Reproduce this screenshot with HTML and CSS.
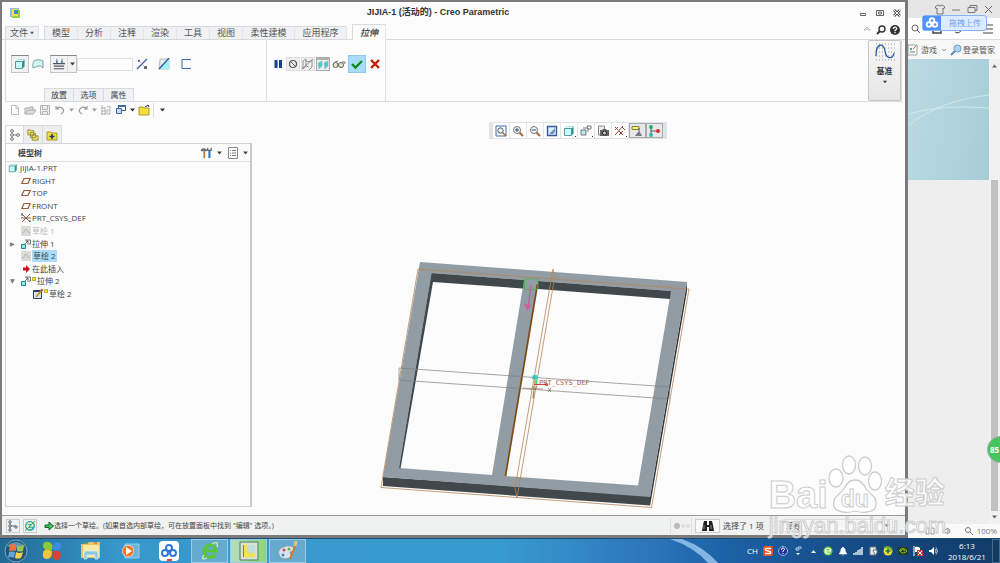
FILE: index.html
```html
<!DOCTYPE html>
<html lang="zh-CN">
<head>
<meta charset="utf-8">
<title>JIJIA-1 (活动的) - Creo Parametric</title>
<link rel="stylesheet" href="styles.css">
</head>
<body>
<svg class="defs" aria-hidden="true">
  <symbol id="caret" viewBox="0 0 5 4"><path d="M0 .5h5L2.500 3.500z" fill="currentColor"/></symbol>
  <symbol id="plane" viewBox="0 0 10 8"><path d="M3 1.500h6.200L7 6.500H.8z" fill="none" stroke="#9c5a35" stroke-width="1.200"/></symbol>
  <symbol id="sketch" viewBox="0 0 10 10"><path d="M0 0h10v10H0z" fill="#dcdcd6"/><path d="M1 7Q3 7 4 4Q5 2 6 4Q7 7 9 7" fill="none" stroke="#b5b5ae"/></symbol>
  <symbol id="extrude" viewBox="0 0 10 10"><path d="M4 1h5.500v4H6" fill="none" stroke="#555" stroke-width=".8"/><path d="M.5 5.500h4v4h-4z" fill="#8fe9ec" stroke="#27858c"/><path d="M4 5l3-3M5 2h2v2" fill="none" stroke="#444" stroke-width=".8"/></symbol>
  <symbol id="cube" viewBox="0 0 12 12"><path d="M1.500 3.500l2-2h7v7l-2 2z" fill="#2d8d93"/><path d="M1.500 3.500l2-2h7l-2 2z" fill="#dcffff"/><path d="M1.500 3.500h7v7h-7z" fill="#c4fbfb" stroke="#3b8388" stroke-width=".8"/></symbol>
  <symbol id="folder" viewBox="0 0 12 12"><path d="M1 3h4l1 1h5v7H1z" fill="#f3e13a" stroke="#99851a" stroke-width=".8"/></symbol>
  <symbol id="lens" viewBox="0 0 12 12"><path d="M7.500 7.500l3.500 3.500" stroke="#a6683b" stroke-width="2"/><circle cx="5" cy="5" r="3.500" fill="#f5fbff" stroke="#6c7075"/></symbol>
</svg>

<div class="desktop">
<section class="creo">
  <header class="titlebar">
    <svg class="app-icon" viewBox="0 0 12 12"><path d="M1 1h9v9H1z" fill="#8dc0df"/><path d="M3 3h8v8H3z" fill="#9dcc42"/><path d="M3 2h6v7H3z" fill="#f4df54"/><path d="M5 3h4v4H5z" fill="#3a91b6"/></svg>
    <h1>JIJIA-1 (活动的) - Creo Parametric</h1>
    <div class="win-buttons">
      <button aria-label="最小化"><svg viewBox="0 0 8 8"><path d="M1.500 4.500h5v2h-5z" fill="none" stroke="#666"/></svg></button>
      <button aria-label="还原"><svg viewBox="0 0 8 8"><path d="M.5 1.500h7v5h-7zM2.500 3h3v2h-3z" fill="none" stroke="#666"/></svg></button>
      <button aria-label="关闭"><svg viewBox="0 0 8 8"><path d="M1 1l6 6M7 1L1 7" stroke="#555" stroke-width="2.600"/><path d="M1 1l6 6M7 1L1 7" stroke="#fff"/></svg></button>
    </div>
  </header>

  <nav class="tabs">
    <button class="tab file">文件<svg class="caret"><use href="#caret"/></svg></button>
    <div class="tab-group">
      <button class="tab">模型</button><button class="tab">分析</button><button class="tab">注释</button><button class="tab">渲染</button><button class="tab">工具</button><button class="tab">视图</button><button class="tab wide">柔性建模</button><button class="tab wide">应用程序</button>
    </div>
    <button class="tab active">拉伸</button>
    <div class="tab-tools">
      <button aria-label="折叠功能区"><svg viewBox="0 0 10 10"><path d="M2 5l3-3 3 3H6.500L5 3.500 3.500 5z" fill="#fff" stroke="#999" stroke-width=".7"/></svg></button>
      <button aria-label="搜索"><svg viewBox="0 0 10 10"><circle cx="6" cy="4" r="3" fill="none" stroke="#333" stroke-width="1.400"/><path d="M4 6L1 9" stroke="#333" stroke-width="2"/></svg></button>
      <button aria-label="帮助"><svg viewBox="0 0 10 10"><circle cx="5" cy="5" r="5" fill="#333"/><path d="M3.300 3.800Q3.500 2.200 5 2.200T6.700 3.700Q6.600 4.700 5.100 5.200V6.200M5 7v1.300" fill="none" stroke="#fff" stroke-width="1.300"/></svg></button>
    </div>
  </nav>

  <div class="ribbon">
    <div class="group options">
      <div class="controls">
        <button class="tool pressed" aria-label="拉伸为实体"><svg class="i12"><use href="#cube"/></svg></button>
        <button class="tool" aria-label="拉伸为曲面"><svg class="i12" viewBox="0 0 12 12"><path d="M1 10Q0 3 4 2Q8 1 11 3V10Q8 7 6 8T1 10z" fill="#d3f6f2" stroke="#6f9895" stroke-width=".9"/></svg></button>
        <button class="tool pressed depth" aria-label="深度选项"><svg class="i14" viewBox="0 0 14 14"><path d="M0 6.500h14M1 9.500h12M1 12.500h12" stroke="#50555e" stroke-width="1.300"/><path d="M4.500 1v5M10.500 1v5" stroke="#4467a8"/><path d="M3 4h3L4.500 6zM9 4h3l-1.500 2z" fill="#4467a8"/></svg><span><svg class="caret"><use href="#caret"/></svg></span></button>
        <input class="depth-value" type="text" aria-label="深度值">
        <button class="tool flip" aria-label="反向"><svg class="i12" viewBox="0 0 12 12"><path d="M1 11L11 1" stroke="#3a5fb0" stroke-width="1.200"/><path d="M2 2h2v2H2zM8 8h3v3H8z" fill="#666"/><path d="M3 3l2 2M7 7l2 2" stroke="#999" stroke-width=".8"/></svg></button>
        <button class="tool" aria-label="移除材料"><svg class="i12" viewBox="0 0 12 12"><path d="M2 1h9v10H1z" fill="#e6ece8" stroke="#a8aaa0" stroke-width=".7"/><path d="M11 1v10H2z" fill="#9bf4f7"/><path d="M1 11L11 0" stroke="#3154ad" stroke-width="1.300"/></svg></button>
        <button class="tool" aria-label="加厚草绘"><svg class="i12" viewBox="0 0 12 12"><path d="M11 1.500H2v9h9" fill="none" stroke="#4163b5"/></svg></button>
      </div>
      <div class="subtabs"><button>放置</button><button>选项</button><button>属性</button></div>
    </div>
    <div class="group confirm">
      <button aria-label="暂停"><svg class="i12" viewBox="0 0 12 12"><path d="M4 2v8M8.500 2v8" stroke="#173f8e" stroke-width="3"/></svg></button>
      <button class="soft" aria-label="无预览"><svg class="i12" viewBox="0 0 12 12"><circle cx="6" cy="6" r="3.500" fill="none" stroke="#555" stroke-width="1.200"/><path d="M3.500 3.500l5 5" stroke="#555"/></svg></button>
      <button class="soft" aria-label="未附加预览"><svg class="i12" viewBox="0 0 12 12"><path d="M1 3l3-2v7l-3 3zM7 4l3-2v7l-3 3M0 11L11 1M4 3l4 1M4 8l3 1" fill="none" stroke="#888" stroke-width=".9"/></svg></button>
      <button class="soft dark" aria-label="附加预览"><svg class="i12" viewBox="0 0 12 12"><path d="M0 1h12" stroke="#777"/><path d="M1 5l4-2v5l-3 3zM7 5l4-2v5l-3 3z" fill="#49cbd2" stroke="#8ebabc" stroke-width=".6"/></svg></button>
      <button class="glasses" aria-label="校验预览"><svg class="i14" viewBox="0 0 14 12"><circle cx="3.500" cy="7" r="2.500" fill="#e8e5d6" stroke="#62614e"/><circle cx="9" cy="7" r="2.500" fill="#e8e5d6" stroke="#62614e"/><path d="M3 4l3-1M10 4l3 0v2" fill="none" stroke="#776"/></svg></button>
      <button class="accept" aria-label="确定"><svg class="i12" viewBox="0 0 12 12"><path d="M1 6l3.500 3.500L11 3" fill="none" stroke="#068d19" stroke-width="2.300"/></svg></button>
      <button class="cancel" aria-label="取消"><svg class="i12" viewBox="0 0 12 12"><path d="M2 2l8 8M10 2L2 10" stroke="#c61a05" stroke-width="2.300"/></svg></button>
    </div>
    <button class="datum"><svg viewBox="0 0 20 20"><path d="M1 2h19M1 6h19M1 10h19M1 14h19M1 18h19" stroke="#9299a3" stroke-dasharray="1 2"/><path d="M1 14C1 0 9 1 10 9S18 18 19 11" fill="none" stroke="#2858a2" stroke-width="1.300"/></svg><span>基准</span><svg class="caret"><use href="#caret"/></svg></button>
  </div>

  <div class="quick">
    <button aria-label="新建"><svg class="i12" viewBox="0 0 12 12"><path d="M2.500 1.500h5l2 2v7h-7zM7 1.500v3h3" fill="#fff" stroke="#bbb"/></svg></button>
    <button aria-label="打开"><svg class="i12" viewBox="0 0 12 12"><path d="M1 10V4h4l1-1h3v3M1 10l3-4h8l-3 4z" fill="#ddd" stroke="#aaa"/></svg></button>
    <button aria-label="保存"><svg class="i12" viewBox="0 0 12 12"><path d="M1.500 1.500h9v9h-9zM3.500 1.500h5v4h-5zM3.500 10V7.500h5V10" fill="#eee" stroke="#b5b5b5"/></svg></button>
    <button class="split" aria-label="撤消"><svg class="i12" viewBox="0 0 12 12"><path d="M2 5q3-3 6-1 4 3-1 6M2 2v3h3" fill="none" stroke="#999" stroke-width="1.200"/></svg><svg class="caret"><use href="#caret"/></svg></button>
    <button class="split" aria-label="重做"><svg class="i12" viewBox="0 0 12 12"><path d="M10 5Q7 2 4 4q-4 3 1 6M10 2v3H7" fill="none" stroke="#999" stroke-width="1.200"/></svg><svg class="caret"><use href="#caret"/></svg></button>
    <button aria-label="重新生成"><svg class="i12" viewBox="0 0 12 12"><path d="M2 1v10M5 3v8M1 4h4M1 7h5M1 10h5M7 3l3-1v3M7 6h3v4H7z" fill="none" stroke="#b2b2b2"/></svg></button>
    <button class="split on" aria-label="窗口"><svg class="i12" viewBox="0 0 12 12"><path d="M3.500 1.500h7v5h-7z" fill="#fff" stroke="#456"/><path d="M3 2h8" stroke="#3a69a7" stroke-width="2"/><path d="M1.500 4.500h5v5h-5z" fill="#c6dcf6" stroke="#3765a9"/></svg><svg class="caret"><use href="#caret"/></svg></button>
    <button aria-label="关闭窗口"><svg class="i12"><use href="#folder"/><path d="M7 3l3-2 1 2" fill="none" stroke="#333"/></svg></button>
    <button class="more" aria-label="自定义"><svg class="caret"><use href="#caret"/></svg></button>
  </div>

  <main class="work">
    <aside class="sidebar">
      <div class="side-tabs">
        <button class="selected" aria-label="模型树"><svg class="i12" viewBox="0 0 12 12"><g fill="#fff" stroke="#666" stroke-width=".9"><circle cx="3" cy="2" r="1.400"/><circle cx="3" cy="6" r="1.400"/><circle cx="3" cy="10" r="1.400"/><circle cx="9" cy="6" r="1.400"/><path d="M4.500 6h3"/></g></svg></button>
        <button aria-label="文件夹浏览器"><svg class="i14" viewBox="0 0 14 14"><path d="M1 1h3l1 1h3v5H1zM4 4h3l1 1h2v5H4zM6 7h3l1 1h3v5H6z" fill="#f2e05b" stroke="#7b7435" stroke-width=".8"/></svg></button>
        <button aria-label="收藏夹"><svg class="i12"><use href="#folder"/><path d="M6 5v5M3.500 7.500h5" stroke="#1c2c87" stroke-width="1.500"/></svg></button>
      </div>
      <div class="panel">
        <div class="panel-head">
          <h2>模型树</h2>
          <button aria-label="设置"><svg class="i14" viewBox="0 0 14 14"><path d="M1 3Q4 0 8 3v2H1z" fill="#69706f"/><path d="M5 5v8" stroke="#bd772d" stroke-width="2"/><path d="M11 4v9" stroke="#2f79bd" stroke-width="2.500"/><path d="M9 1v3h4V1" fill="none" stroke="#666" stroke-width="1.500"/></svg><svg class="caret"><use href="#caret"/></svg></button>
          <button aria-label="显示"><svg class="i12" viewBox="0 0 12 12"><path d="M1.500.5h9v11h-9z" fill="#fff" stroke="#8a8a82"/><path d="M3 3.500h1M5 3.500h4M3 6h1M5 6h4M3 8.500h1M5 8.500h4" stroke="#777"/></svg><svg class="caret"><use href="#caret"/></svg></button>
        </div>
        <ul class="tree">
          <li class="root"><svg class="i10" viewBox="0 0 12 12"><use href="#cube"/></svg>JIJIA-1.PRT</li>
          <li><svg class="i10"><use href="#plane"/></svg>RIGHT</li>
          <li><svg class="i10"><use href="#plane"/></svg>TOP</li>
          <li><svg class="i10"><use href="#plane"/></svg>FRONT</li>
          <li><svg class="i10" viewBox="0 0 10 10"><path d="M1 1l8 8M1 9l8-8M0 5h10" stroke="#8a5a3c"/><path d="M1 0v3M8 8h2" stroke="#555"/></svg>PRT_CSYS_DEF</li>
          <li class="muted"><svg class="i10"><use href="#sketch"/></svg>草绘 1</li>
          <li><span class="twist">▶</span><svg class="i10"><use href="#extrude"/></svg>拉伸 1</li>
          <li><svg class="i10"><use href="#sketch"/></svg><mark>草绘 2</mark></li>
          <li><svg class="i10" viewBox="0 0 10 10"><path d="M2 3.500h3V1L9 5 5 9V6.500H2z" fill="#c81818"/></svg>在此插入</li>
          <li><span class="twist">▼</span><svg class="i10"><use href="#extrude"/></svg><i class="new"></i>拉伸 2</li>
          <li class="child"><svg class="i10" viewBox="0 0 10 10"><path d="M.5 1.500h8v8h-8z" fill="#dfe7ee" stroke="#253e72"/><path d="M1 2h7" stroke="#253e72" stroke-width="2"/><path d="M3 8l6-7" stroke="#c78b22" stroke-width="1.800"/><path d="M8.500 1.500L9.500.5" stroke="#b41c17" stroke-width="2"/></svg><i class="new"></i>草绘 2</li>
        </ul>
      </div>
    </aside>

    <section class="viewport">
      <div class="view-tools">
        <button aria-label="重新调整"><svg class="i12" viewBox="0 0 12 12"><path d="M1 1h10v10H1z" fill="#fff" stroke="#4168a8"/><circle cx="5.500" cy="5.500" r="2.700" fill="#e5f0f8" stroke="#555"/><path d="M7.500 7.500L11 11" stroke="#a6683b" stroke-width="1.600"/></svg></button>
        <button aria-label="放大"><svg class="i12"><use href="#lens"/><path d="M3 5h4M5 3v4" stroke="#444"/></svg></button>
        <button aria-label="缩小"><svg class="i12"><use href="#lens"/><path d="M3 5h4" stroke="#444"/></svg></button>
        <button aria-label="重画"><svg class="i12" viewBox="0 0 12 12"><path d="M1.500 1.500h9v9h-9z" fill="#e0ecfb" stroke="#36599a" stroke-width="1.400"/><path d="M3 9l6-6v4L7 9z" fill="#7193c4"/></svg></button>
        <button class="drop" aria-label="显示样式"><svg class="i12"><use href="#cube"/></svg></button>
        <button class="drop" aria-label="已保存方向"><svg class="i12" viewBox="0 0 12 12"><path d="M1 5h5v5H1z" fill="#b5eeee" stroke="#777"/><path d="M3 3h5v4M7 1h4v3H8z" fill="none" stroke="#777"/></svg></button>
        <button aria-label="视图管理器"><svg class="i12" viewBox="0 0 12 12"><path d="M1.500 1h6v9h-6z" fill="#eee" stroke="#888"/><path d="M3 5h2l1-1h3l1 1h2v6H3z" fill="#666"/><circle cx="7.500" cy="8" r="2" fill="#ccc" stroke="#222"/></svg></button>
        <button class="drop" aria-label="基准显示"><svg class="i12" viewBox="0 0 12 12"><path d="M1 2l3 3M1 5l3-3M1 10L9 1M5 6l4 4M5 10l4-4M8 2l3 3" stroke="#8b4c33"/></svg></button>
        <button class="down" aria-label="注释显示"><svg class="i12" viewBox="0 0 12 12"><path d="M1 1.500h7v3H1z" fill="#f7ef78" stroke="#89803b"/><path d="M8 3v4" stroke="#555"/><path d="M4 11l3-4h2l2 4z" fill="#747980"/></svg></button>
        <button class="down" aria-label="旋转中心"><svg class="i12" viewBox="0 0 12 12"><path d="M3 2v8M3 6h6" stroke="#555"/><circle cx="3" cy="2" r="1.900" fill="#26a764"/><circle cx="3" cy="10" r="1.900" fill="#2bb4a9"/><circle cx="10" cy="6" r="2" fill="#d7272c"/></svg></button>
      </div>
      <svg class="model" viewBox="252 139 653 376" role="img" aria-label="窗框模型">
        <path d="M687 282V291L650 506V497z" fill="#30373b"/>
        <path d="M383 477L650 496V505.500L383 486z" fill="#41484c"/>
        <path fill-rule="evenodd" d="M420 262L687 282L650 497L383 477zM431.500 273L524 280L492 475L399 468zM538 281L671 291L638 485.500L505 476z" fill="#919ca4"/>
        <path d="M431.500 273L524 280L523 288.500L433 282L400.500 468.500L399 468z" fill="#41484c"/>
        <path d="M538 281L671 291L670 299L538 289z" fill="#41484c"/>
        <path d="M537.500 284L505.500 476" stroke="#7b4b0e" stroke-width="1.700"/>
        <path d="M418 269L689 289L651.500 507.500L381 487.500zM553 269L554.500 278L517 498L515 488zM523 388L543 389M535 378L533 398" fill="none" stroke="#b98455" stroke-width=".8"/>
        <path d="M399 368L670 387L669 399L399 380z" fill="none" stroke="#808080" stroke-width=".7"/>
        <path d="M524.500 279h13.500v10.500h-13.500z" fill="none" stroke="#4caf55" stroke-width=".8"/>
        <path d="M531 285L528.500 305" stroke="#c9589b" stroke-width="1.300"/><path d="M524 304l7 1-3.500 6z" fill="#d45b9f"/>
        <path d="M536 375v10" stroke="#35d95b" stroke-width="1.500"/><circle cx="534.500" cy="377" r="2.300" fill="#24d7d9"/>
        <path d="M534 384.500h12" stroke="#dc3e40"/><circle cx="546.500" cy="384.500" r="1.600" fill="#ea3440"/>
        <path d="M532 379l3-2M533 386l2 4 2-4M548 388l3 4M551 388l-3 4M534 391l-1 8" stroke="#806b59" stroke-width=".7" fill="none"/>
        <text x="539" y="385" class="csys">PRT_CSYS_DEF</text>
      </svg>
    </section>
  </main>

  <footer class="status">
    <button aria-label="导航区"><svg class="i12" viewBox="0 0 12 12"><g fill="#fff" stroke="#4b6078"><path d="M3 2v8M3 6h6"/><circle cx="3" cy="2" r="1.200"/><circle cx="3" cy="6" r="1.200"/><circle cx="3" cy="10" r="1.200"/><circle cx="9" cy="7" r="1.200"/></g></svg></button>
    <button aria-label="浏览器"><svg class="i12" viewBox="0 0 12 12"><circle cx="6" cy="6" r="5" fill="#2ba7b6"/><path d="M3 7Q3 3 6 3t3 3H3q1 4 5 2" fill="none" stroke="#e7f3b1" stroke-width="1.300"/><path d="M1 11Q3 9 11 1" stroke="#6c962b" fill="none"/></svg></button>
    <p><svg class="i10" viewBox="0 0 10 10"><path d="M1 4h4V1l4.500 4L5 9V6.500H1z" fill="#35cb5a" stroke="#215631"/></svg>选择一个草绘。(如果首选内部草绘，可在放置面板中找到 "编辑" 选项。)</p>
    <span class="lights"><i></i><i></i><i></i></span>
    <button class="find" aria-label="查找"><svg class="i14" viewBox="0 0 14 12"><path d="M2 5l1-4h3v4h2V1h3l1 4 1 6H8V7H6v4H1z" fill="#20241f"/><path d="M3 5v4M10 5v4" stroke="#85907b"/></svg></button>
    <span class="picked">选择了 1 项</span>
    <label class="filter"><select aria-label="选择过滤器"><option>草绘</option></select><svg class="caret"><use href="#caret"/></svg></label>
  </footer>
</section>

<section class="browser">
  <div class="browser-title">
    <svg class="i12" viewBox="0 0 12 12"><path d="M4 2q2 2 4 0l3 2-1.500 2L9 5v6H3V5l-.5 1L1 4z" fill="none" stroke="#777"/></svg>
    <svg class="i12" viewBox="0 0 12 12"><path d="M2 7h8" stroke="#777"/></svg>
    <svg class="i12" viewBox="0 0 12 12"><path d="M2 4.500h7v5H2zM4 4V2.500h7v5H9" fill="none" stroke="#777"/></svg>
    <svg class="i12" viewBox="0 0 12 12"><path d="M3 3l7 7M10 3l-7 7" stroke="#666"/></svg>
  </div>
  <div class="browser-bar">
    <svg class="i12" viewBox="0 0 12 12"><circle cx="6" cy="5" r="3" fill="none" stroke="#666"/><path d="M8 7l3 3" stroke="#666"/></svg>
    <svg class="i12" viewBox="0 0 12 12"><path d="M2 5h8v5H2z" fill="none" stroke="#444" stroke-width="1.500"/></svg>
    <svg class="i12" viewBox="0 0 12 12"><path d="M2 9q4 3 8-4" fill="none" stroke="#444"/></svg>
    <svg class="i12" viewBox="0 0 12 12"><path d="M1 2h10M1 6h10M1 10h10" stroke="#444" stroke-width="1.200"/></svg>
    <button class="upload"><span><svg viewBox="0 0 14 14"><g fill="none" stroke="#fff" stroke-width="1.900"><circle cx="7" cy="4.500" r="2.300"/><circle cx="4" cy="8.500" r="2.300"/><circle cx="10" cy="8.500" r="2.300"/></g></svg></span>拖拽上传</button>
  </div>
  <div class="bookmarks">
    <a href="#games"><svg class="i12" viewBox="0 0 12 12"><path d="M0 1h9v10H0z" fill="#f4faf8" stroke="#92a6a4"/><circle cx="3" cy="5" r="1.200" fill="#50a68f"/><path d="M5 5l3-3" stroke="#dc6b46"/><path d="M2 8h5" stroke="#777"/></svg>游戏</a>
    <svg class="chev" viewBox="0 0 6 6"><path d="M1 2l2 2 2-2" fill="none" stroke="#777" stroke-width=".8"/></svg>
    <a href="#login"><svg class="i12" viewBox="0 0 12 12"><circle cx="7.500" cy="4.500" r="3.600" fill="#a9d5ef" stroke="#6b9fc0"/><path d="M5 7l-4 4" stroke="#5a8fb3" stroke-width="2"/></svg>登录管家</a>
  </div>
  <div class="page">
    <div class="page-body"><svg class="banner" viewBox="0 0 82 121" preserveAspectRatio="none"><path d="M0 67Q30 42 82 36M0 55Q35 45 82 49" fill="none" stroke="#d8ecef" stroke-width=".8"/></svg></div>
    <div class="scroll"><svg class="caret up"><use href="#caret"/></svg><i></i><svg class="caret"><use href="#caret"/></svg></div>
  </div>
  <div class="browser-foot">
    <svg class="i10" viewBox="0 0 10 10"><path d="M1 2h3v6H1zM6 2h3v6H6z" fill="none" stroke="#999"/></svg>
    <svg class="i10" viewBox="0 0 10 10"><path d="M1 4h2l3-2v6L3 6H1zM7 3q2 2 0 4" fill="none" stroke="#888"/></svg>
    <svg class="i10" viewBox="0 0 10 10"><circle cx="4" cy="4" r="2.500" fill="none" stroke="#777"/><path d="M6 6l3 3" stroke="#777"/></svg>100%
  </div>
  <div class="ball">85</div>
</section>
</div>

<footer class="taskbar">
  <svg class="glow" viewBox="0 0 60 24" preserveAspectRatio="none"><path d="M0 0H12Q34 8 48 24H38Q24 8 0 0z" fill="#9ccbf0"/></svg>
  <button class="task start" aria-label="开始"><svg viewBox="0 0 24 24"><circle cx="12" cy="12" r="11" fill="#235779" stroke="#78a3bd"/><path d="M3 7q9-8 18 0-9 5-18 0" fill="#5d91ad"/><path d="M6 6q3-2 6 0v6q-3-1-7 0z" fill="#ef7340"/><path d="M13 6q3 2 7 0l-1 6q-3 1-6 0z" fill="#96c651"/><path d="M5 13q3-1 6 0l-1 6q-3-2-6 0z" fill="#5ea7df"/><path d="M12 13q3 2 7 0l-2 6q-3 1-6 0z" fill="#f7d14b"/></svg></button>
  <button class="task" aria-label="浏览器"><svg viewBox="0 0 20 20"><path d="M10 9Q1 10 1 5t6-4q5 2 3 8" fill="#8bca38"/><path d="M11 9q-1-8 4-8t4 5-8 3" fill="#3d8ae2"/><path d="M10 10q0 8-5 8t-4-6 9-2" fill="#f6c62f"/><path d="M11 10q8-1 8 4t-5 5-3-9" fill="#db4039"/></svg></button>
  <button class="task" aria-label="资源管理器"><svg viewBox="0 0 20 20"><path d="M0 3h6l2-2h11v16H0z" fill="#e5c567"/><path d="M2 4h16v12H2z" fill="#fae8a5"/><path d="M3 18v-6q0-2 2-2h10q2 0 2 2v6h-3v-4H6v4z" fill="#8fc8e4" stroke="#dcf1f5" stroke-width=".7"/><path d="M3 2h3" stroke="#53a052" stroke-width="2"/><path d="M13 2h3" stroke="#d6534a"/></svg></button>
  <button class="task" aria-label="媒体播放器"><svg viewBox="0 0 20 20"><path d="M5 3h14v14H5z" fill="#6fb3d9" stroke="#97cde9"/><circle cx="8" cy="10" r="6" fill="#fff"/><circle cx="8" cy="10" r="5.500" fill="#f37427"/><path d="M6 6l6 4-6 4z" fill="#fff"/></svg></button>
  <button class="task" aria-label="百度网盘"><svg viewBox="0 0 20 20"><rect width="20" height="20" rx="4" fill="#fff"/><g fill="none" stroke="#2e78db" stroke-width="2"><circle cx="10" cy="7" r="3"/><circle cx="6" cy="12" r="3"/><circle cx="14" cy="12" r="3"/></g><path d="M8 19h5" stroke="#dc4848" stroke-width="2"/></svg></button>
  <div class="running">
    <button aria-label="360浏览器"><svg viewBox="0 0 20 20"><path d="M16 13q-3 4-7 3-5-1-5-6 1-6 6-6 6 1 6 6H5" fill="none" stroke="#55c832" stroke-width="3"/><path d="M4 14Q0 20 7 17M12 3q7-4 5 3" fill="none" stroke="#d8efa2" stroke-width="1.300"/></svg></button>
    <button class="current" aria-label="Creo Parametric"><svg viewBox="0 0 20 20"><path d="M1 1h18v18H1z" fill="#d7e3cf" stroke="#4c7c62"/><path d="M4 4h12v12H4z" fill="#41939c"/><path d="M5 4h4v8h7v4H5z" fill="#f1e34c"/><path d="M9 4h7v8H9z" fill="#bedddc"/></svg></button>
    <button aria-label="画图"><svg viewBox="0 0 20 20"><path d="M2 16Q-2 9 5 6q8-3 11 1 1 4-4 4 3 6-4 7-4 0-6-2" fill="#d7e5eb" stroke="#839ba7"/><circle cx="6" cy="9" r="1.500" fill="#d34e4b"/><circle cx="11" cy="8" r="1.500" fill="#63ae55"/><circle cx="5" cy="14" r="1.500" fill="#4283ce"/><path d="M12 18L18 3" stroke="#d57c22" stroke-width="2"/><path d="M17 5l1-5" stroke="#e9c37b" stroke-width="3"/></svg></button>
  </div>
  <div class="tray">
    <span>CH</span>
    <svg class="i10" viewBox="0 0 10 10"><rect width="10" height="10" rx="2" fill="#ec5023"/><path d="M8 2.500H4q-3 0-1 2l4 1q2 2-1 2H2" fill="none" stroke="#fff" stroke-width="1.300"/></svg>
    <svg class="i10" viewBox="0 0 10 10"><circle cx="5" cy="5" r="4.500" fill="#1d359c" stroke="#9eb3e4"/><path d="M3.500 4q0-2 1.500-2t1.500 1.500L5 5v1M5 7v1" fill="none" stroke="#fff"/></svg>
    <svg class="i10" viewBox="0 0 10 10"><path d="M3 2h3v2H3zM5 1h3v2" fill="none" stroke="#dce9f8" stroke-width=".8"/><path d="M3 7h4L5 9z" fill="#fff"/></svg>
    <svg class="i10" viewBox="0 0 10 10"><path d="M3 7h5L5.500 4z" fill="#fff"/></svg>
    <svg class="i10" viewBox="0 0 10 10"><circle cx="5" cy="5" r="4.500" fill="#70cf4a"/><path d="M2.500 5h5q0-3-3-2.500t-2 4Q4 8 7 7" fill="none" stroke="#fff" stroke-width="1.200"/></svg>
    <svg class="i10" viewBox="0 0 10 10"><path d="M1 8q2-2 2-5l1-1q1-2 2 0l1 1q0 3 2 5zM4 9h2" fill="#fff" stroke="#fff" stroke-width=".5"/></svg>
    <svg class="i10" viewBox="0 0 10 10"><path d="M1 9V7M3 9V6M5 9V4M7 9V3M9 9V1" stroke="#e2eaf2" stroke-width="1.500"/></svg>
    <svg class="i10" viewBox="0 0 10 10"><path d="M2 1h6v8H2z" fill="#e7e9e9" stroke="#747f88"/><path d="M5 4h4v3L7 9z" fill="#fff" stroke="#697682"/></svg>
    <svg class="i10" viewBox="0 0 10 10"><circle cx="5" cy="5" r="4.500" fill="#f1dc2d"/><path d="M1 2q4-3 8 2" fill="none" stroke="#52ab37" stroke-width="1.500"/><path d="M5 2.500v5M2.500 5h5" stroke="#23764a" stroke-width="1.700"/></svg>
    <svg class="i10" viewBox="0 0 10 10"><path d="M0 1h10v8H0z" fill="#263e21"/><path d="M1 5q4-5 8 0-4 4-7 0 3-3 5 0" fill="none" stroke="#86bf29"/></svg>
    <svg class="i10" viewBox="0 0 10 10"><path d="M1 0v10" stroke="#fff"/><path d="M2 1q3-1 5 1v4H2z" fill="#fff"/><path d="M4 4h6v6H4z" fill="#d83a3b"/><path d="M5 5l4 4M9 5L5 9" stroke="#fff"/></svg>
    <svg class="i10" viewBox="0 0 10 10"><path d="M1 4h2l3-3v8L3 6H1z" fill="#fff"/><path d="M7 3q2 2 0 4M8 1.500q3 3.500 0 7" fill="none" stroke="#dce7f1" stroke-width=".8"/></svg>
    <time>6:13<br>2018/6/21</time>
  </div>
  <button class="show-desktop" aria-label="显示桌面"></button>
</footer>

<div class="watermark">
  <div class="brand"><b>Bai</b><span class="paw"><svg viewBox="0 0 54 58"><g fill="#fff" fill-opacity=".9" stroke="#ccc" stroke-width="1.300"><ellipse cx="8" cy="23" rx="7" ry="9"/><ellipse cx="21" cy="10" rx="6.500" ry="9"/><ellipse cx="37" cy="11" rx="6.500" ry="9"/><ellipse cx="47" cy="26" rx="6.500" ry="9"/><path d="M27 25q7 0 11 9l9 9q4 13-8 14-5 1-12-1-7 2-12 1-13-2-8-14l9-9q4-9 11-9z"/></g></svg><em>du</em></span><b class="cn">经验</b></div>
  <div class="site">jingyan.baidu.com</div>
</div>
</body>
</html>
```
FILE: styles.css
```css
* { box-sizing: border-box; }
body {
  margin: 0; height: 100vh; display: flex; flex-direction: column; overflow: hidden;
  position: relative; background: #ededed; color: #444;
  font: 8px/12px "Open Sans", "Noto Sans CJK SC", sans-serif;
}
button, input, select { font: inherit; color: inherit; margin: 0; padding: 0; border: 0; background: none; border-radius: 0; }
button { display: flex; align-items: center; justify-content: center; flex: none; }
h1, h2, p, ul { margin: 0; padding: 0; }
svg { display: block; flex: none; }
.defs { position: absolute; width: 0; height: 0; }
.i10 { width: 10px; height: 10px; }
.i12 { width: 12px; height: 12px; }
.i14 { width: 14px; height: 12px; }
.caret { width: 5px; height: 4px; }

.desktop { flex: 1; min-height: 0; display: flex; }
.creo {
  flex: 1; min-width: 0; display: flex; flex-direction: column; background: #fcfcfc;
  border: 3px solid #7c7a7a; border-top-width: 2px; border-left-width: 2px;
}

/* Title and tab strip */
.titlebar { height: 22px; display: flex; align-items: center; padding: 0 4px 0 7px; }
.app-icon { width: 12px; height: 12px; }
.titlebar h1 { flex: 1; text-align: center; font: bold 9px/14px "Liberation Sans", "Noto Sans CJK SC", sans-serif; color: #333; padding: 0 4px 3px 0; }
.win-buttons { display: flex; gap: 9px; }
.win-buttons button, .win-buttons svg { width: 8px; height: 8px; }
.tabs { height: 16px; display: flex; align-items: flex-end; padding: 0 3px; border-bottom: 1px solid #d8dbdd; font-size: 9px; }
.tab { height: 13px; width: 33px; background: #eff1f3; border-top: 1px solid #d8dbdd; border-right: 1px solid #e2e4e6; gap: 2px; color: #555; }
.tab.file { width: 34px; border-left: 1px solid #d8dbdd; margin-right: 5px; }
.tab .caret { width: 4px; }
.tab.wide { width: 52px; }
.tab-group { display: flex; border-left: 1px solid #d8dbdd; }
.tab.active { width: 34px; height: 16px; margin: 0 0 -1px 5px; background: #fcfcfc; border-left: 1px solid #d8dbdd; font-weight: bold; font-style: italic; }
.tab-tools { display: flex; gap: 4px; margin-left: auto; padding: 0 2px 4px; }
.tab-tools svg { width: 10px; height: 10px; }

/* Ribbon */
.ribbon { height: 62px; flex: none; display: flex; margin: 0 3px; border: 1px solid #d8dbdd; border-top: 0; }
.group { border-right: 1px solid #e0e0e0; display: flex; }
.options { width: 261px; flex-direction: column; justify-content: space-between; }
.controls { display: flex; align-items: center; padding: 15px 0 0 5px; }
.tool { width: 18px; height: 18px; }
.tool + .tool { margin-left: 4px; }
.tool + .depth { margin-left: 0; }
.tool.pressed { border: 1px solid #c5c5c5; border-top: 1px solid #888; background: #f2f2f2; }
.tool.depth { width: 27px; justify-content: space-between; padding: 0 1px; }
.depth span { border-left: 1px solid #ddd; align-self: stretch; display: flex; align-items: center; padding-left: 2px; }
.depth-value { width: 56px; height: 13px; border: 1px solid #dedede; background: #fff; }
.depth-value + .tool { margin-left: 0; }
.controls .tool:nth-child(2) { margin-left: 0; }
.controls .depth { margin-left: 3px; }
.subtabs { display: flex; padding-left: 38px; }
.subtabs button { width: 30px; height: 13px; background: #eff1f3; border: 1px solid #d8dbdd; border-left-width: 0; border-bottom: 0; }
.subtabs button:first-child { border-left-width: 1px; }
.confirm { width: 119px; align-items: flex-start; padding: 15px 0 0 4px; }
.confirm button { width: 14px; height: 18px; }
.confirm .soft { height: 14px; margin: 2px 0 0 1px; background: #eee; border: 1px solid #ddd; }
.confirm .dark { border-color: #aaa; }
.confirm .glasses { width: 17px; padding-left: 1px; }
.confirm .accept { width: 18px; background: #a9dcfb; border: 1px solid #8cc9ef; margin-left: 1px; }
.confirm .cancel { width: 18px; }
.datum { width: 33px; margin-left: auto; border: 1px solid #c6c6c6; border-radius: 2px; background: linear-gradient(#f8f8f8, #e6e6e6); flex-direction: column; justify-content: flex-start; gap: 3px; font-weight: bold; color: #333; padding-top: 1px; }
.datum > svg:first-child { width: 20px; height: 20px; }
.datum .caret { width: 4px; }

/* Quick access */
.quick { height: 16px; flex: none; display: flex; align-items: center; padding-left: 7px; gap: 3px; }
.quick .split { gap: 3px; color: #999; }
.quick .on, .quick .more { color: #333; }
.quick .more { border-left: 1px solid #ddd; height: 15px; padding-left: 6px; }

/* Model tree */
.work { flex: 1; min-height: 0; display: flex; padding-left: 3px; }
.sidebar { width: 247px; flex: none; display: flex; flex-direction: column; padding: 7px 0 8px; }
.side-tabs { display: flex; }
.side-tabs button { width: 19px; height: 18px; background: #eceef0; border: 1px solid #d8dbdd; border-bottom: 0; border-left-width: 0; }
.side-tabs .selected { background: #fcfcfc; border-left-width: 1px; }
.panel { flex: 1; border: 1px solid #d2d4d5; border-right: 2px solid #c6c8ca; }
.panel-head { height: 18px; display: flex; align-items: center; gap: 5px; padding: 0 2px 0 12px; border-bottom: 1px solid #dedede; }
.panel-head h2 { flex: 1; font-size: 8px; line-height: 12px; }
.panel-head button { gap: 4px; }
.tree { list-style: none; height: 138px; display: grid; grid-template-rows: repeat(11, 1fr); }
.tree li { display: flex; align-items: center; gap: 1px; padding-left: 15px; }
.tree .root { padding-left: 2px; gap: 2px; }
.tree .child { padding-left: 27px; }
.tree .muted { color: #bbb; }
.tree mark { background: #a9ddfa; color: inherit; padding: 0 1px; }
.twist { width: 10px; margin-left: -11px; font: 6px/8px "DejaVu Sans", sans-serif; color: #777; }
.new { width: 4px; height: 4px; background: #efe62e; border: 1px solid #b9ae38; align-self: flex-start; margin-top: 2px; }

/* Graphics window */
.viewport { flex: 1; min-width: 0; display: flex; flex-direction: column; align-items: center; padding-top: 4px; }
.view-tools { display: flex; flex: none; border: 1px solid #dfe3e5; border-width: 1px 4px; margin-right: 2px; }
.view-tools button { width: 17px; height: 15px; border-right: 1px solid #e2e4e5; position: relative; background: #fff; }
.view-tools .drop::after { content: ""; position: absolute; right: 1px; bottom: 1px; width: 1px; height: 1px; background: #333; }
.view-tools .down { background: #e4e8ea; border: 1px solid #aaa; }
.model { flex: 1; width: 100%; min-height: 0; }
.csys { font: 7px "DejaVu Sans Mono", monospace; fill: #a96541; }

/* Status bar */
.status { height: 20px; flex: none; display: flex; align-items: center; gap: 3px; padding: 0 12px 0 4px; background: #f0f1f1; border-top: 1px solid #999; }
.status > button:not(.find) { width: 14px; height: 14px; border: 1px solid #ccc; }
.status p { flex: 1; display: flex; align-items: center; padding-left: 4px; font-size: 7px; }
.lights { display: flex; align-items: center; gap: 1px; border: 1px solid #e0e0e0; border-width: 0 1px; height: 16px; padding: 0 1px 0 3px; }
.lights i { width: 4px; height: 4px; border-radius: 50%; background: #ddd; }
.lights i:first-child { width: 6px; height: 6px; background: #bbb; }
.find { width: 25px; height: 14px; border: 1px solid #ccc; background: #fafafa; }
.picked { width: 57px; }
.filter { display: flex; align-items: center; width: 110px; height: 13px; padding-right: 2px; border: 1px solid #ddd; background: #f7f7f7; }
.filter select { appearance: none; flex: 1; padding-left: 2px; line-height: 11px; }

/* Browser behind */
.browser { width: 92px; flex: none; display: flex; flex-direction: column; position: relative; background: #eee; }
.browser-title { height: 18px; flex: none; display: flex; align-items: center; justify-content: flex-end; gap: 4px; padding-right: 6px; background: #e6e6e6; }
.browser-bar { height: 22px; flex: none; display: flex; align-items: center; gap: 10px; padding: 0 6px 0 1px; background: #fff; border-bottom: 1px solid #ddd; position: relative; }
.browser-bar > svg:nth-of-type(4) { margin-left: auto; }
.upload { position: absolute; left: 14px; right: 13px; top: -3px; height: 16px; border: 1px solid #84b4f5; border-radius: 3px; background: #dcebff; color: #72a2ed; justify-content: flex-start; }
.upload span { width: 18px; height: 14px; background: #4d93fb; margin-right: 8px; display: flex; justify-content: center; }
.upload svg { width: 14px; height: 14px; }
.bookmarks { height: 19px; flex: none; display: flex; align-items: center; justify-content: space-between; padding-right: 5px; background: #f8f8f8; }
.bookmarks a { display: flex; align-items: center; color: #555; text-decoration: none; gap: 1px; }
.chev { width: 6px; height: 6px; }
.page { flex: 1; min-height: 0; display: flex; }
.page-body { flex: 1; }
.banner { width: 100%; height: 121px; background: linear-gradient(100deg, #bbdbe3, #a7ccd6); }
.scroll { width: 11px; display: flex; flex-direction: column; align-items: center; padding: 5px 0; color: #666; background: #f1f1f1; }
.scroll i { flex: 1; width: 7px; margin: 112px 0 4px; background: #c1c1c1; }
.up { transform: rotate(180deg); }
.browser-foot { height: 14px; flex: none; display: flex; align-items: center; justify-content: flex-end; gap: 7px; padding-right: 3px; background: #fafafa; color: #777; }
.browser-foot svg:nth-of-type(3) { margin: 0 -4px 0 5px; }
.ball { position: absolute; right: -14px; top: 436px; width: 27px; height: 27px; border-radius: 50%; background: #45c65c; border: 1px solid #a0aaa2; color: #fff; font-weight: bold; line-height: 25px; padding-left: 2px; }

/* Taskbar */
.taskbar { height: 25px; flex: none; display: flex; align-items: center; padding-left: 4px; position: relative; border-top: 1px solid #174d75; background: linear-gradient(90deg, #216a94, #3798cc 12%, #389bd0 50%, #2d78bc 64%, #1d63a8 72%, #15477f 88%, #123b68); }
.glow { position: absolute; left: 67%; top: 0; width: 60px; height: 24px; opacity: .8; }
.task { width: 39px; height: 24px; }
.task svg, .running svg { width: 20px; height: 20px; }
.task.start { width: 28px; justify-content: flex-start; }
.task.start svg { width: 24px; height: 24px; }
.running { display: flex; gap: 2px; padding-left: 3px; }
.running button { width: 37px; height: 24px; border: 1px solid #98cce7; background: #65abd0; }
.running .current { background: linear-gradient(90deg, #b4dec0, #8ed576); }
.tray { margin-left: auto; display: flex; align-items: center; gap: 5px; color: #fff; }
.tray time { width: 48px; text-align: center; line-height: 11px; }
.show-desktop { width: 8px; height: 24px; margin-left: 1px; border: 1px solid #3f6b94; background: #16395e; }

/* Watermark */
.watermark { position: absolute; right: 54px; bottom: 24px; pointer-events: none; color: rgba(255, 255, 255, .85); font-family: "Liberation Sans", "Noto Sans CJK SC", sans-serif; -webkit-text-stroke: 1px #ccc; }
.brand { display: flex; align-items: flex-end; height: 58px; }
.brand b { font-size: 38px; line-height: 36px; }
.brand .cn { font-size: 30px; line-height: 40px; margin-left: 3px; }
.paw { width: 54px; height: 58px; position: relative; }
.paw em { position: absolute; left: 0; right: 0; bottom: 4px; text-align: center; font: bold 23px/20px "Liberation Sans", sans-serif; }
.site { font-size: 22px; line-height: 26px; text-align: right; -webkit-text-stroke-width: 1px; }
```
